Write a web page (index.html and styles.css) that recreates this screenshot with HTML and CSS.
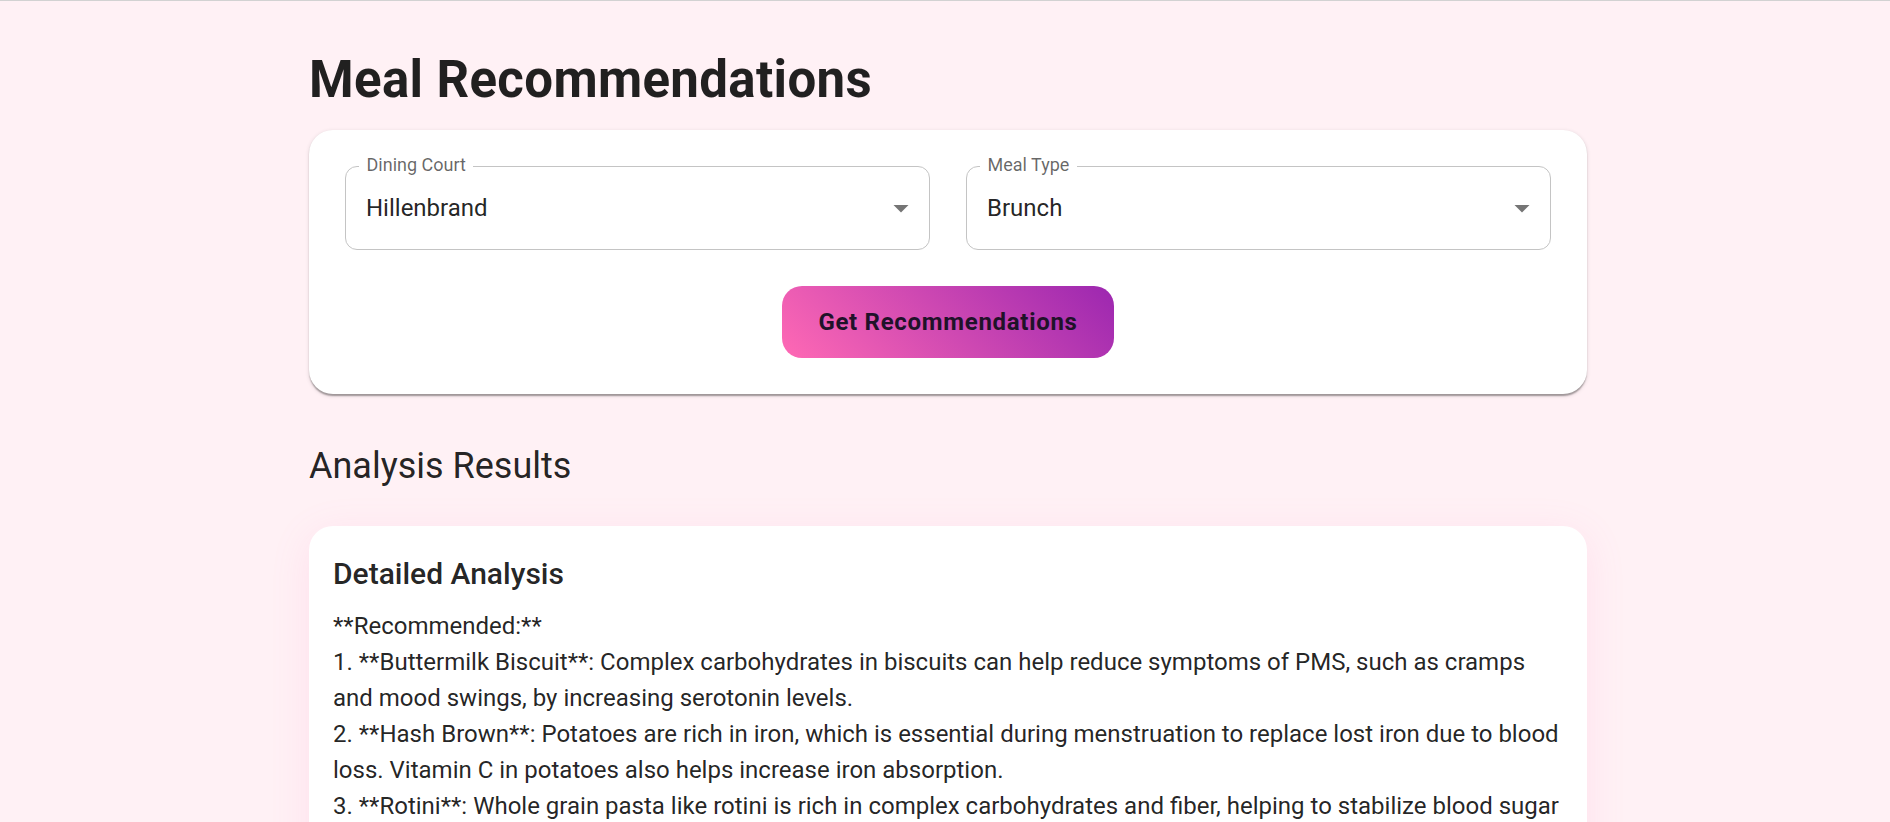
FILE: index.html
```html
<!DOCTYPE html>
<html lang="en">
<head>
<meta charset="utf-8">
<title>Meal Recommendations</title>
<link rel="stylesheet" href="styles.css">
</head>
<body>
<main class="page">
  <h1 class="title">Meal Recommendations</h1>

  <section class="card form-card">
    <div class="fields">
      <div class="field">
        <span class="field-label">Dining Court</span>
        <span class="field-value">Hillenbrand</span>
        <svg class="field-arrow" viewBox="0 0 24 24" width="36" height="36" aria-hidden="true"><path d="M7 10l5 5 5-5z"/></svg>
      </div>
      <div class="field">
        <span class="field-label">Meal Type</span>
        <span class="field-value">Brunch</span>
        <svg class="field-arrow" viewBox="0 0 24 24" width="36" height="36" aria-hidden="true"><path d="M7 10l5 5 5-5z"/></svg>
      </div>
    </div>
    <div class="actions">
      <button class="btn-primary" type="button">Get Recommendations</button>
    </div>
  </section>

  <h2 class="section-title">Analysis Results</h2>

  <section class="card result-card">
    <h3 class="result-title">Detailed Analysis</h3>
    <p class="result-text">**Recommended:**
1. **Buttermilk Biscuit**: Complex carbohydrates in biscuits can help reduce symptoms of PMS, such as cramps and mood swings, by increasing serotonin levels.
2. **Hash Brown**: Potatoes are rich in iron, which is essential during menstruation to replace lost iron due to blood loss. Vitamin C in potatoes also helps increase iron absorption.
3. **Rotini**: Whole grain pasta like rotini is rich in complex carbohydrates and fiber, helping to stabilize blood sugar levels and reduce fatigue and irritability.
4. **Scrambled Eggs**: Eggs provide protein and vitamin B6, which can help ease bloating and mood changes.</p>
  </section>
</main>
</body>
</html>
```

FILE: styles.css
```css
* {
  box-sizing: border-box;
}

html, body {
  margin: 0;
  padding: 0;
}

body {
  background: #fff1f5;
  border-top: 1px solid #d2d2d2;
  padding-left: 6px;
  font-family: Roboto, "Noto Sans", "Liberation Sans", sans-serif;
  color: rgba(0, 0, 0, 0.87);
}

.page {
  width: 1278px;
  margin: 0 auto;
  padding-top: 48px;
  padding-bottom: 48px;
}

.title {
  margin: 0 0 17.85px;
  font-size: 51px;
  font-weight: 700;
  line-height: 1.235;
  letter-spacing: 0.35px;
}

.card {
  background: #ffffff;
  border-radius: 24px;
}

.form-card {
  padding: 36px;
  box-shadow: 0 3px 1.5px -1.5px rgba(0, 0, 0, 0.2), 0 1.5px 1.5px 0 rgba(0, 0, 0, 0.14), 0 1.5px 4.5px 0 rgba(0, 0, 0, 0.12);
}

.fields {
  display: flex;
  gap: 36px;
}

.field {
  flex: 1 1 0;
  position: relative;
  height: 84px;
  border: 1px solid #c4c4c4;
  border-radius: 12px;
  display: flex;
  align-items: center;
  padding: 0 20px;
}

.field-label {
  position: absolute;
  top: -11px;
  left: 13px;
  padding: 0 7.5px;
  background: #ffffff;
  font-size: 18px;
  line-height: 18px;
  color: rgba(0, 0, 0, 0.6);
}

.field-value {
  font-size: 24px;
  line-height: 28px;
}

.field-arrow {
  position: absolute;
  right: 10px;
  top: 50%;
  margin-top: -18px;
  fill: #757575;
}

.actions {
  display: flex;
  justify-content: center;
  margin-top: 36px;
}

.btn-primary {
  height: 72px;
  padding: 0 36px;
  border: 0;
  border-radius: 20px;
  background: linear-gradient(45deg, #ff69b4 0%, #9c27b0 100%);
  font-family: Roboto, "Noto Sans", sans-serif;
  font-size: 24px;
  font-weight: 700;
  letter-spacing: 0.7px;
  color: #1f1229;
  cursor: pointer;
}

.section-title {
  margin: 48px 0 36px;
  font-size: 36px;
  font-weight: 400;
  line-height: 48px;
}

.result-card {
  padding: 24px;
  box-shadow: 0 8px 40px rgba(255, 105, 180, 0.12);
}

.result-title {
  margin: 0 0 10.5px;
  font-size: 30px;
  font-weight: 500;
  line-height: 48px;
}

.result-text {
  margin: 0;
  font-size: 24px;
  line-height: 36px;
  white-space: pre-line;
}
```
